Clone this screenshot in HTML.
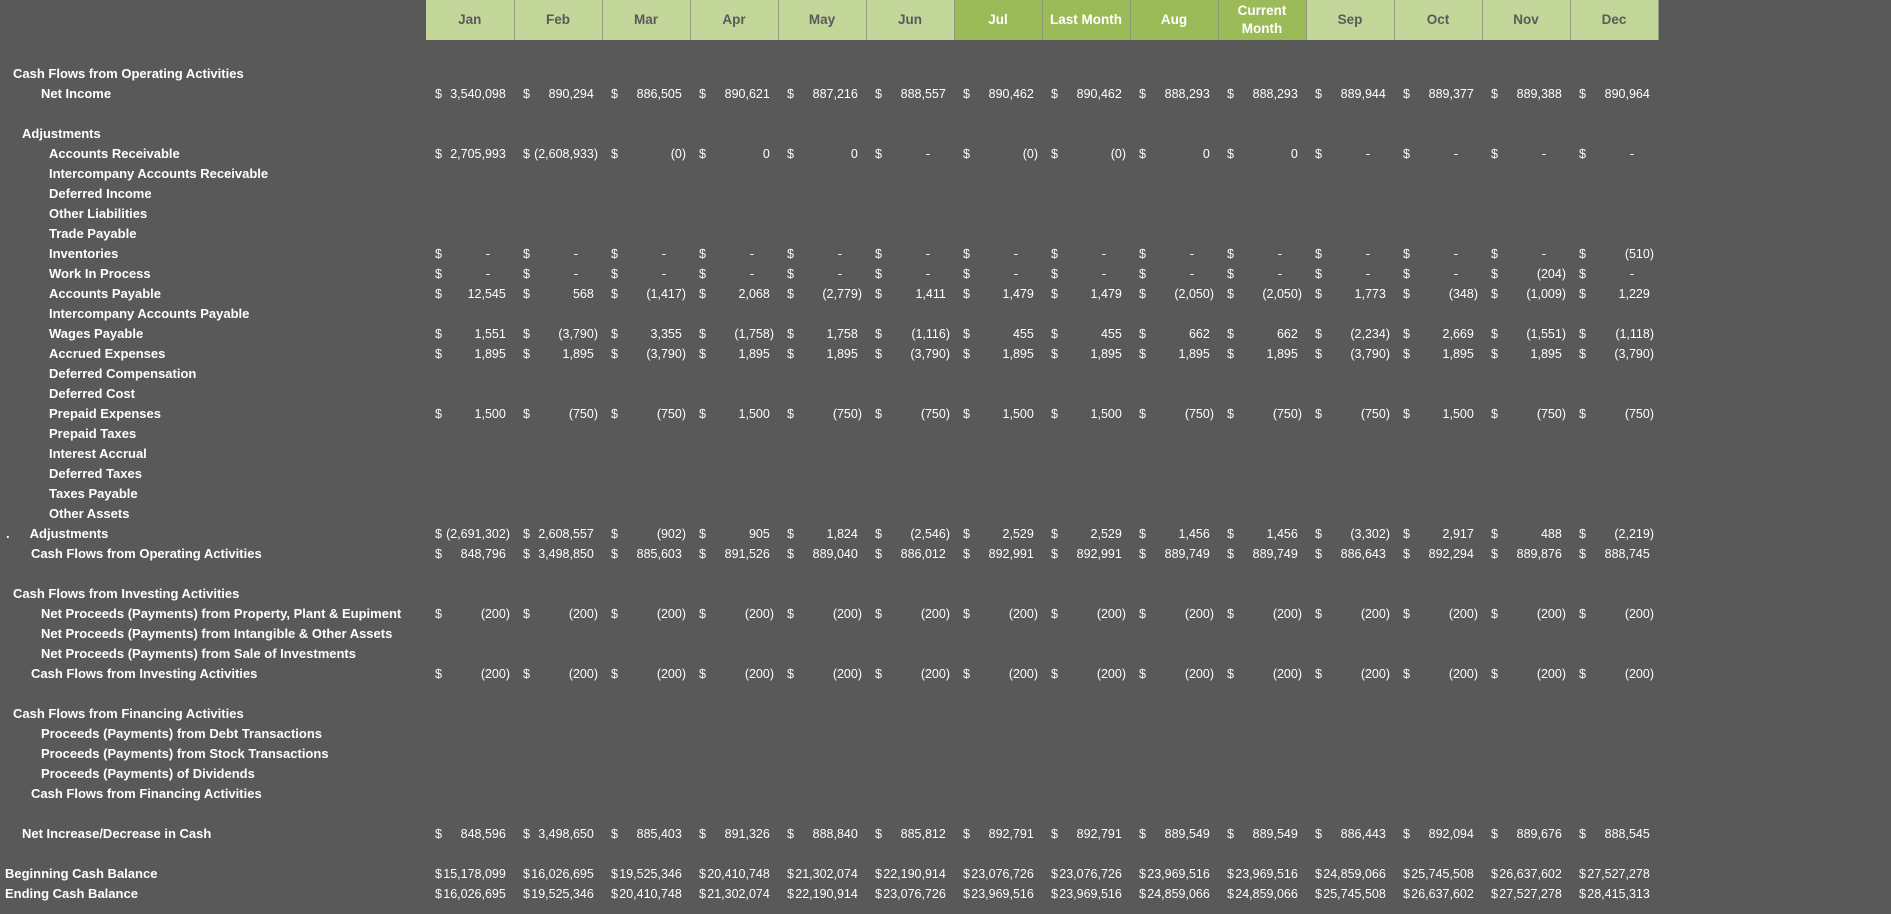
<!DOCTYPE html>
<html><head><meta charset="utf-8">
<style>
body{margin:0;background:#595959;width:1891px;height:914px;overflow:hidden;font-family:"Liberation Sans",sans-serif;color:#fff}
table{border-collapse:collapse;table-layout:fixed;position:absolute;left:0;top:0}
td{padding:0;height:20px;white-space:nowrap;font-size:12.5px;line-height:20px;overflow:visible}
td.l{font-weight:bold;font-size:13px}
td.v{text-align:right;padding-right:4px;padding-left:9px}
td.v i{float:left;font-style:normal}
s{visibility:hidden;text-decoration:none}
em{font-style:normal;padding-right:20px}
th{height:40px;background:#c4d79b;color:#5a5a5a;font-size:13.5px;font-weight:bold;border-right:1px solid #8e9a78;line-height:18px;padding:0}
th.d{background:#9bbb59;color:#fff}
tr.sp td{height:24px}
</style></head><body>
<table>
<colgroup><col style="width:426px"><col span="14" style="width:88px"></colgroup>
<tr><td></td><th>Jan</th><th>Feb</th><th>Mar</th><th>Apr</th><th>May</th><th>Jun</th><th class="d">Jul</th><th class="d">Last Month</th><th class="d">Aug</th><th class="d">Current<br>Month</th><th>Sep</th><th>Oct</th><th>Nov</th><th>Dec</th></tr>
<tr class="sp"><td colspan="15"></td></tr>
<tr><td class="l" style="padding-left:13px">Cash Flows from Operating Activities</td><td colspan="14"></td></tr>
<tr><td class="l" style="padding-left:41px">Net Income</td><td class="v"><i>$</i>3,540,098<s>)</s></td><td class="v"><i>$</i>890,294<s>)</s></td><td class="v"><i>$</i>886,505<s>)</s></td><td class="v"><i>$</i>890,621<s>)</s></td><td class="v"><i>$</i>887,216<s>)</s></td><td class="v"><i>$</i>888,557<s>)</s></td><td class="v"><i>$</i>890,462<s>)</s></td><td class="v"><i>$</i>890,462<s>)</s></td><td class="v"><i>$</i>888,293<s>)</s></td><td class="v"><i>$</i>888,293<s>)</s></td><td class="v"><i>$</i>889,944<s>)</s></td><td class="v"><i>$</i>889,377<s>)</s></td><td class="v"><i>$</i>889,388<s>)</s></td><td class="v"><i>$</i>890,964<s>)</s></td></tr>
<tr><td colspan="15"></td></tr>
<tr><td class="l" style="padding-left:22px">Adjustments</td><td colspan="14"></td></tr>
<tr><td class="l" style="padding-left:49px">Accounts Receivable</td><td class="v"><i>$</i>2,705,993<s>)</s></td><td class="v"><i>$</i>(2,608,933)</td><td class="v"><i>$</i>(0)</td><td class="v"><i>$</i>0<s>)</s></td><td class="v"><i>$</i>0<s>)</s></td><td class="v"><i>$</i><em>-</em></td><td class="v"><i>$</i>(0)</td><td class="v"><i>$</i>(0)</td><td class="v"><i>$</i>0<s>)</s></td><td class="v"><i>$</i>0<s>)</s></td><td class="v"><i>$</i><em>-</em></td><td class="v"><i>$</i><em>-</em></td><td class="v"><i>$</i><em>-</em></td><td class="v"><i>$</i><em>-</em></td></tr>
<tr><td class="l" style="padding-left:49px">Intercompany Accounts Receivable</td><td colspan="14"></td></tr>
<tr><td class="l" style="padding-left:49px">Deferred Income</td><td colspan="14"></td></tr>
<tr><td class="l" style="padding-left:49px">Other Liabilities</td><td colspan="14"></td></tr>
<tr><td class="l" style="padding-left:49px">Trade Payable</td><td colspan="14"></td></tr>
<tr><td class="l" style="padding-left:49px">Inventories</td><td class="v"><i>$</i><em>-</em></td><td class="v"><i>$</i><em>-</em></td><td class="v"><i>$</i><em>-</em></td><td class="v"><i>$</i><em>-</em></td><td class="v"><i>$</i><em>-</em></td><td class="v"><i>$</i><em>-</em></td><td class="v"><i>$</i><em>-</em></td><td class="v"><i>$</i><em>-</em></td><td class="v"><i>$</i><em>-</em></td><td class="v"><i>$</i><em>-</em></td><td class="v"><i>$</i><em>-</em></td><td class="v"><i>$</i><em>-</em></td><td class="v"><i>$</i><em>-</em></td><td class="v"><i>$</i>(510)</td></tr>
<tr><td class="l" style="padding-left:49px">Work In Process</td><td class="v"><i>$</i><em>-</em></td><td class="v"><i>$</i><em>-</em></td><td class="v"><i>$</i><em>-</em></td><td class="v"><i>$</i><em>-</em></td><td class="v"><i>$</i><em>-</em></td><td class="v"><i>$</i><em>-</em></td><td class="v"><i>$</i><em>-</em></td><td class="v"><i>$</i><em>-</em></td><td class="v"><i>$</i><em>-</em></td><td class="v"><i>$</i><em>-</em></td><td class="v"><i>$</i><em>-</em></td><td class="v"><i>$</i><em>-</em></td><td class="v"><i>$</i>(204)</td><td class="v"><i>$</i><em>-</em></td></tr>
<tr><td class="l" style="padding-left:49px">Accounts Payable</td><td class="v"><i>$</i>12,545<s>)</s></td><td class="v"><i>$</i>568<s>)</s></td><td class="v"><i>$</i>(1,417)</td><td class="v"><i>$</i>2,068<s>)</s></td><td class="v"><i>$</i>(2,779)</td><td class="v"><i>$</i>1,411<s>)</s></td><td class="v"><i>$</i>1,479<s>)</s></td><td class="v"><i>$</i>1,479<s>)</s></td><td class="v"><i>$</i>(2,050)</td><td class="v"><i>$</i>(2,050)</td><td class="v"><i>$</i>1,773<s>)</s></td><td class="v"><i>$</i>(348)</td><td class="v"><i>$</i>(1,009)</td><td class="v"><i>$</i>1,229<s>)</s></td></tr>
<tr><td class="l" style="padding-left:49px">Intercompany Accounts Payable</td><td colspan="14"></td></tr>
<tr><td class="l" style="padding-left:49px">Wages Payable</td><td class="v"><i>$</i>1,551<s>)</s></td><td class="v"><i>$</i>(3,790)</td><td class="v"><i>$</i>3,355<s>)</s></td><td class="v"><i>$</i>(1,758)</td><td class="v"><i>$</i>1,758<s>)</s></td><td class="v"><i>$</i>(1,116)</td><td class="v"><i>$</i>455<s>)</s></td><td class="v"><i>$</i>455<s>)</s></td><td class="v"><i>$</i>662<s>)</s></td><td class="v"><i>$</i>662<s>)</s></td><td class="v"><i>$</i>(2,234)</td><td class="v"><i>$</i>2,669<s>)</s></td><td class="v"><i>$</i>(1,551)</td><td class="v"><i>$</i>(1,118)</td></tr>
<tr><td class="l" style="padding-left:49px">Accrued Expenses</td><td class="v"><i>$</i>1,895<s>)</s></td><td class="v"><i>$</i>1,895<s>)</s></td><td class="v"><i>$</i>(3,790)</td><td class="v"><i>$</i>1,895<s>)</s></td><td class="v"><i>$</i>1,895<s>)</s></td><td class="v"><i>$</i>(3,790)</td><td class="v"><i>$</i>1,895<s>)</s></td><td class="v"><i>$</i>1,895<s>)</s></td><td class="v"><i>$</i>1,895<s>)</s></td><td class="v"><i>$</i>1,895<s>)</s></td><td class="v"><i>$</i>(3,790)</td><td class="v"><i>$</i>1,895<s>)</s></td><td class="v"><i>$</i>1,895<s>)</s></td><td class="v"><i>$</i>(3,790)</td></tr>
<tr><td class="l" style="padding-left:49px">Deferred Compensation</td><td colspan="14"></td></tr>
<tr><td class="l" style="padding-left:49px">Deferred Cost</td><td colspan="14"></td></tr>
<tr><td class="l" style="padding-left:49px">Prepaid Expenses</td><td class="v"><i>$</i>1,500<s>)</s></td><td class="v"><i>$</i>(750)</td><td class="v"><i>$</i>(750)</td><td class="v"><i>$</i>1,500<s>)</s></td><td class="v"><i>$</i>(750)</td><td class="v"><i>$</i>(750)</td><td class="v"><i>$</i>1,500<s>)</s></td><td class="v"><i>$</i>1,500<s>)</s></td><td class="v"><i>$</i>(750)</td><td class="v"><i>$</i>(750)</td><td class="v"><i>$</i>(750)</td><td class="v"><i>$</i>1,500<s>)</s></td><td class="v"><i>$</i>(750)</td><td class="v"><i>$</i>(750)</td></tr>
<tr><td class="l" style="padding-left:49px">Prepaid Taxes</td><td colspan="14"></td></tr>
<tr><td class="l" style="padding-left:49px">Interest Accrual</td><td colspan="14"></td></tr>
<tr><td class="l" style="padding-left:49px">Deferred Taxes</td><td colspan="14"></td></tr>
<tr><td class="l" style="padding-left:49px">Taxes Payable</td><td colspan="14"></td></tr>
<tr><td class="l" style="padding-left:49px">Other Assets</td><td colspan="14"></td></tr>
<tr><td class="l" style="padding-left:6px">.<span style="padding-left:20px">Adjustments</span></td><td class="v"><i>$</i>(2,691,302)</td><td class="v"><i>$</i>2,608,557<s>)</s></td><td class="v"><i>$</i>(902)</td><td class="v"><i>$</i>905<s>)</s></td><td class="v"><i>$</i>1,824<s>)</s></td><td class="v"><i>$</i>(2,546)</td><td class="v"><i>$</i>2,529<s>)</s></td><td class="v"><i>$</i>2,529<s>)</s></td><td class="v"><i>$</i>1,456<s>)</s></td><td class="v"><i>$</i>1,456<s>)</s></td><td class="v"><i>$</i>(3,302)</td><td class="v"><i>$</i>2,917<s>)</s></td><td class="v"><i>$</i>488<s>)</s></td><td class="v"><i>$</i>(2,219)</td></tr>
<tr><td class="l" style="padding-left:31px">Cash Flows from Operating Activities</td><td class="v"><i>$</i>848,796<s>)</s></td><td class="v"><i>$</i>3,498,850<s>)</s></td><td class="v"><i>$</i>885,603<s>)</s></td><td class="v"><i>$</i>891,526<s>)</s></td><td class="v"><i>$</i>889,040<s>)</s></td><td class="v"><i>$</i>886,012<s>)</s></td><td class="v"><i>$</i>892,991<s>)</s></td><td class="v"><i>$</i>892,991<s>)</s></td><td class="v"><i>$</i>889,749<s>)</s></td><td class="v"><i>$</i>889,749<s>)</s></td><td class="v"><i>$</i>886,643<s>)</s></td><td class="v"><i>$</i>892,294<s>)</s></td><td class="v"><i>$</i>889,876<s>)</s></td><td class="v"><i>$</i>888,745<s>)</s></td></tr>
<tr><td colspan="15"></td></tr>
<tr><td class="l" style="padding-left:13px">Cash Flows from Investing Activities</td><td colspan="14"></td></tr>
<tr><td class="l" style="padding-left:41px">Net Proceeds (Payments) from Property, Plant &amp; Eupiment</td><td class="v"><i>$</i>(200)</td><td class="v"><i>$</i>(200)</td><td class="v"><i>$</i>(200)</td><td class="v"><i>$</i>(200)</td><td class="v"><i>$</i>(200)</td><td class="v"><i>$</i>(200)</td><td class="v"><i>$</i>(200)</td><td class="v"><i>$</i>(200)</td><td class="v"><i>$</i>(200)</td><td class="v"><i>$</i>(200)</td><td class="v"><i>$</i>(200)</td><td class="v"><i>$</i>(200)</td><td class="v"><i>$</i>(200)</td><td class="v"><i>$</i>(200)</td></tr>
<tr><td class="l" style="padding-left:41px">Net Proceeds (Payments) from Intangible &amp; Other Assets</td><td colspan="14"></td></tr>
<tr><td class="l" style="padding-left:41px">Net Proceeds (Payments) from Sale of Investments</td><td colspan="14"></td></tr>
<tr><td class="l" style="padding-left:31px">Cash Flows from Investing Activities</td><td class="v"><i>$</i>(200)</td><td class="v"><i>$</i>(200)</td><td class="v"><i>$</i>(200)</td><td class="v"><i>$</i>(200)</td><td class="v"><i>$</i>(200)</td><td class="v"><i>$</i>(200)</td><td class="v"><i>$</i>(200)</td><td class="v"><i>$</i>(200)</td><td class="v"><i>$</i>(200)</td><td class="v"><i>$</i>(200)</td><td class="v"><i>$</i>(200)</td><td class="v"><i>$</i>(200)</td><td class="v"><i>$</i>(200)</td><td class="v"><i>$</i>(200)</td></tr>
<tr><td colspan="15"></td></tr>
<tr><td class="l" style="padding-left:13px">Cash Flows from Financing Activities</td><td colspan="14"></td></tr>
<tr><td class="l" style="padding-left:41px">Proceeds (Payments) from Debt Transactions</td><td colspan="14"></td></tr>
<tr><td class="l" style="padding-left:41px">Proceeds (Payments) from Stock Transactions</td><td colspan="14"></td></tr>
<tr><td class="l" style="padding-left:41px">Proceeds (Payments) of Dividends</td><td colspan="14"></td></tr>
<tr><td class="l" style="padding-left:31px">Cash Flows from Financing Activities</td><td colspan="14"></td></tr>
<tr><td colspan="15"></td></tr>
<tr><td class="l" style="padding-left:22px">Net Increase/Decrease in Cash</td><td class="v"><i>$</i>848,596<s>)</s></td><td class="v"><i>$</i>3,498,650<s>)</s></td><td class="v"><i>$</i>885,403<s>)</s></td><td class="v"><i>$</i>891,326<s>)</s></td><td class="v"><i>$</i>888,840<s>)</s></td><td class="v"><i>$</i>885,812<s>)</s></td><td class="v"><i>$</i>892,791<s>)</s></td><td class="v"><i>$</i>892,791<s>)</s></td><td class="v"><i>$</i>889,549<s>)</s></td><td class="v"><i>$</i>889,549<s>)</s></td><td class="v"><i>$</i>886,443<s>)</s></td><td class="v"><i>$</i>892,094<s>)</s></td><td class="v"><i>$</i>889,676<s>)</s></td><td class="v"><i>$</i>888,545<s>)</s></td></tr>
<tr><td colspan="15"></td></tr>
<tr><td class="l" style="padding-left:5px">Beginning Cash Balance</td><td class="v"><i>$</i>15,178,099<s>)</s></td><td class="v"><i>$</i>16,026,695<s>)</s></td><td class="v"><i>$</i>19,525,346<s>)</s></td><td class="v"><i>$</i>20,410,748<s>)</s></td><td class="v"><i>$</i>21,302,074<s>)</s></td><td class="v"><i>$</i>22,190,914<s>)</s></td><td class="v"><i>$</i>23,076,726<s>)</s></td><td class="v"><i>$</i>23,076,726<s>)</s></td><td class="v"><i>$</i>23,969,516<s>)</s></td><td class="v"><i>$</i>23,969,516<s>)</s></td><td class="v"><i>$</i>24,859,066<s>)</s></td><td class="v"><i>$</i>25,745,508<s>)</s></td><td class="v"><i>$</i>26,637,602<s>)</s></td><td class="v"><i>$</i>27,527,278<s>)</s></td></tr>
<tr><td class="l" style="padding-left:5px">Ending Cash Balance</td><td class="v"><i>$</i>16,026,695<s>)</s></td><td class="v"><i>$</i>19,525,346<s>)</s></td><td class="v"><i>$</i>20,410,748<s>)</s></td><td class="v"><i>$</i>21,302,074<s>)</s></td><td class="v"><i>$</i>22,190,914<s>)</s></td><td class="v"><i>$</i>23,076,726<s>)</s></td><td class="v"><i>$</i>23,969,516<s>)</s></td><td class="v"><i>$</i>23,969,516<s>)</s></td><td class="v"><i>$</i>24,859,066<s>)</s></td><td class="v"><i>$</i>24,859,066<s>)</s></td><td class="v"><i>$</i>25,745,508<s>)</s></td><td class="v"><i>$</i>26,637,602<s>)</s></td><td class="v"><i>$</i>27,527,278<s>)</s></td><td class="v"><i>$</i>28,415,313<s>)</s></td></tr>
</table>
</body></html>
